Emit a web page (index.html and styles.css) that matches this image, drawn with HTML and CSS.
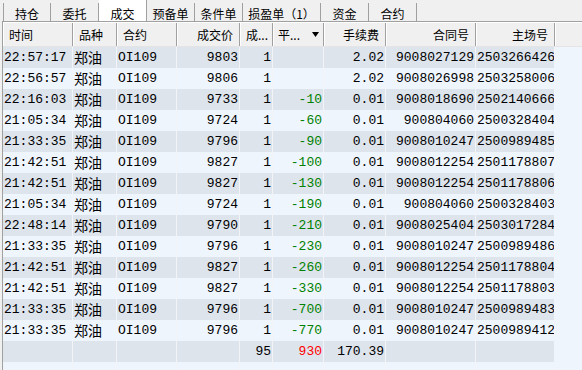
FILE: index.html
```html
<!DOCTYPE html>
<html lang="zh">
<head>
<meta charset="utf-8">
<link rel="stylesheet" href="styles.css">
</head>
<body>
<div class="tabs">
  <div class="tab first">持仓</div>
  <div class="tab">委托</div>
  <div class="tab active">成交</div>
  <div class="tab">预备单</div>
  <div class="tab">条件单</div>
  <div class="tab wide">损盈单（1）</div>
  <div class="tab">资金</div>
  <div class="tab">合约</div>
</div>
<div class="grid">
  <div class="head">
    <div class="h l">时间</div>
    <div class="h l">品种</div>
    <div class="h l">合约</div>
    <div class="h r">成交价</div>
    <div class="h l">成...</div>
    <div class="h sort"><span>平...</span><svg class="arrow" width="7" height="5" viewBox="0 0 7 5"><path d="M0 0H7L3.5 5Z" fill="#000"/></svg></div>
    <div class="h r">手续费</div>
    <div class="h r">合同号</div>
    <div class="h r">主场号</div>
    <div class="h last"></div>
  </div>
  <div class="row"><div class="c">22:57:17</div><div class="c cn">郑油</div><div class="c">OI109</div><div class="c n">9803</div><div class="c n">1</div><div class="c n g"></div><div class="c n">2.02</div><div class="c n">9008027129</div><div class="c n">2503266426</div><div class="c e"></div></div>
  <div class="row"><div class="c">22:56:57</div><div class="c cn">郑油</div><div class="c">OI109</div><div class="c n">9806</div><div class="c n">1</div><div class="c n g"></div><div class="c n">2.02</div><div class="c n">9008026998</div><div class="c n">2503258006</div><div class="c e"></div></div>
  <div class="row"><div class="c">22:16:03</div><div class="c cn">郑油</div><div class="c">OI109</div><div class="c n">9733</div><div class="c n">1</div><div class="c n g">-10</div><div class="c n">0.01</div><div class="c n">9008018690</div><div class="c n">2502140666</div><div class="c e"></div></div>
  <div class="row"><div class="c">21:05:34</div><div class="c cn">郑油</div><div class="c">OI109</div><div class="c n">9724</div><div class="c n">1</div><div class="c n g">-60</div><div class="c n">0.01</div><div class="c n">900804060</div><div class="c n">2500328404</div><div class="c e"></div></div>
  <div class="row"><div class="c">21:33:35</div><div class="c cn">郑油</div><div class="c">OI109</div><div class="c n">9796</div><div class="c n">1</div><div class="c n g">-90</div><div class="c n">0.01</div><div class="c n">9008010247</div><div class="c n">2500989485</div><div class="c e"></div></div>
  <div class="row"><div class="c">21:42:51</div><div class="c cn">郑油</div><div class="c">OI109</div><div class="c n">9827</div><div class="c n">1</div><div class="c n g">-100</div><div class="c n">0.01</div><div class="c n">9008012254</div><div class="c n">2501178807</div><div class="c e"></div></div>
  <div class="row"><div class="c">21:42:51</div><div class="c cn">郑油</div><div class="c">OI109</div><div class="c n">9827</div><div class="c n">1</div><div class="c n g">-130</div><div class="c n">0.01</div><div class="c n">9008012254</div><div class="c n">2501178806</div><div class="c e"></div></div>
  <div class="row"><div class="c">21:05:34</div><div class="c cn">郑油</div><div class="c">OI109</div><div class="c n">9724</div><div class="c n">1</div><div class="c n g">-190</div><div class="c n">0.01</div><div class="c n">900804060</div><div class="c n">2500328403</div><div class="c e"></div></div>
  <div class="row"><div class="c">22:48:14</div><div class="c cn">郑油</div><div class="c">OI109</div><div class="c n">9790</div><div class="c n">1</div><div class="c n g">-210</div><div class="c n">0.01</div><div class="c n">9008025404</div><div class="c n">2503017284</div><div class="c e"></div></div>
  <div class="row"><div class="c">21:33:35</div><div class="c cn">郑油</div><div class="c">OI109</div><div class="c n">9796</div><div class="c n">1</div><div class="c n g">-230</div><div class="c n">0.01</div><div class="c n">9008010247</div><div class="c n">2500989486</div><div class="c e"></div></div>
  <div class="row"><div class="c">21:42:51</div><div class="c cn">郑油</div><div class="c">OI109</div><div class="c n">9827</div><div class="c n">1</div><div class="c n g">-260</div><div class="c n">0.01</div><div class="c n">9008012254</div><div class="c n">2501178804</div><div class="c e"></div></div>
  <div class="row"><div class="c">21:42:51</div><div class="c cn">郑油</div><div class="c">OI109</div><div class="c n">9827</div><div class="c n">1</div><div class="c n g">-330</div><div class="c n">0.01</div><div class="c n">9008012254</div><div class="c n">2501178803</div><div class="c e"></div></div>
  <div class="row"><div class="c">21:33:35</div><div class="c cn">郑油</div><div class="c">OI109</div><div class="c n">9796</div><div class="c n">1</div><div class="c n g">-700</div><div class="c n">0.01</div><div class="c n">9008010247</div><div class="c n">2500989483</div><div class="c e"></div></div>
  <div class="row"><div class="c">21:33:35</div><div class="c cn">郑油</div><div class="c">OI109</div><div class="c n">9796</div><div class="c n">1</div><div class="c n g">-770</div><div class="c n">0.01</div><div class="c n">9008010247</div><div class="c n">2500989412</div><div class="c e"></div></div>
  <div class="row"><div class="c"></div><div class="c"></div><div class="c"></div><div class="c"></div><div class="c n">95</div><div class="c n red">930</div><div class="c n">170.39</div><div class="c"></div><div class="c"></div><div class="c e"></div></div>
  <div class="row"><div class="c"></div><div class="c"></div><div class="c"></div><div class="c"></div><div class="c"></div><div class="c"></div><div class="c"></div><div class="c"></div><div class="c"></div><div class="c e"></div></div>
</div>
</body>
</html>
```

FILE: styles.css
```css
html, body {
  margin: 0;
  padding: 0;
  background: #f0f0f0;
  overflow: hidden;
}
body {
  width: 582px;
  height: 370px;
  font-family: "Noto Sans CJK SC", "Liberation Sans", sans-serif;
  font-size: 12px;
  color: #000;
}
.tabs {
  display: flex;
  align-items: flex-start;
  height: 21px;
  padding-left: 3px;
}
.tab {
  box-sizing: border-box;
  width: 48px;
  height: 18px;
  margin-top: 3px;
  padding-top: 3px;
  line-height: 15px;
  text-align: center;
  border-right: 1px solid #a0a0a0;
  white-space: nowrap;
}
.tab.first {
  width: 48px;
  border-left: 1px solid #a0a0a0;
}
.tab.active {
  background: #fff;
  height: 21px;
  margin-top: 0;
  padding-top: 6px;
}
.tab.wide {
  width: 78px;
}
.grid {
  margin-left: 2px;
  border-left: 1px solid #a0a0a0;
  border-top: 1px solid #a0a0a0;
}
.head, .row {
  display: grid;
  grid-template-columns: 70px 44px 60px 63px 33px 51px 62px 90px 79px 1fr;
}
.head {
  height: 25px;
  box-sizing: border-box;
  background: #f0f0f0;
  border-top: 1px solid #fff;
  border-bottom: 1px solid #e4e4e4;
}
.h {
  box-sizing: border-box;
  line-height: 22px;
  padding-top: 1px;
  border-right: 1px solid #a0a0a0;
  box-shadow: inset 1px 0 0 #fff;
  white-space: nowrap;
  overflow: hidden;
}
.h.l { padding-left: 6px; }
.h.r { text-align: right; padding-right: 6px; }
.h.sort {
  display: flex;
  align-items: center;
  justify-content: space-between;
  padding-left: 5px;
  padding-right: 4px;
}
.h.sort .arrow { margin-top: -1px; }
.h.last { border-right: none; }
.row {
  height: 21px;
  font-family: "Liberation Mono", "Noto Sans CJK SC", monospace;
  font-size: 13px;
  line-height: 21px;
}
.row:nth-of-type(odd) { background: #eef5fd; }
.row:nth-of-type(even) { background: #dde4ec; }
.c {
  box-sizing: border-box;
  padding: 0 1px;
  border-right: 1px solid #f1f5fa;
  white-space: nowrap;
  overflow: hidden;
}
.c.cn {
  font-family: "Noto Sans CJK SC", sans-serif;
  font-size: 14px;
}
.c.n { text-align: right; }
.c.g { color: #008000; }
.c.red { color: #ff0000; }
.c.e { border-right: none; background: #eef5fd; }
```
